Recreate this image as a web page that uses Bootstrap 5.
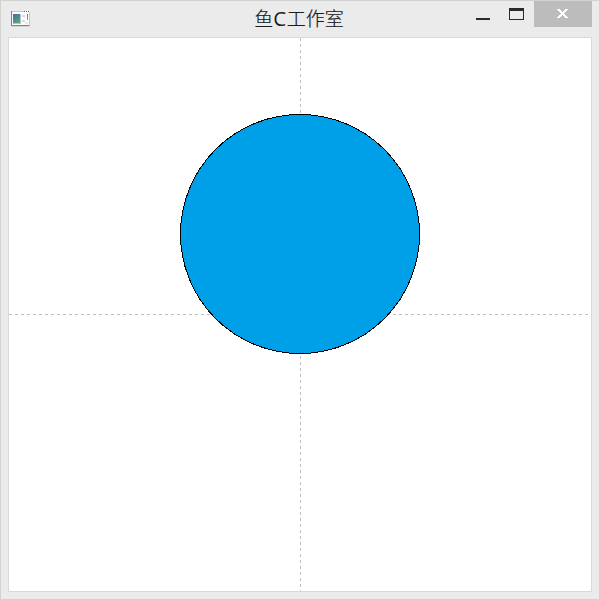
<!DOCTYPE html>
<html lang="zh-CN">
<head>
<meta charset="utf-8">
<meta name="viewport" content="width=device-width, initial-scale=1">
<title>鱼C工作室</title>
<link href="https://cdn.jsdelivr.net/npm/bootstrap@5.3.0/dist/css/bootstrap.min.css" rel="stylesheet">
<style>
body { background: #ebebeb; }
.app-window { width: 600px; height: 600px; background: #ebebeb; border: 1px solid #d2d2d2; }
.title-bar { height: 36px; }
.app-icon { margin: 9px 0 0 9px; }
.window-title { font: 300 19px/34px "Noto Sans CJK SC", sans-serif; color: #1c1c1c; white-space: nowrap; padding-right: 2px; -webkit-text-stroke: .2px #1c1c1c; }
.window-title .latin { font: 400 20.5px/1 "Open Sans", sans-serif; letter-spacing: .5px; -webkit-text-stroke: 0; }
.side { width: 200px; }
.side-end { width: 200px; padding-right: 7px; }
.win-btn { padding: 0; border: 0; background: none; line-height: 0; }
.win-close { background: #bcbcbc; }
.canvas-area { margin: 0 7px 7px; border: 1px solid #d9d9d9; background: #fff; line-height: 0; }
svg { display: block; }
</style>
</head>
<body>
<div class="app-window d-flex flex-column overflow-hidden">
  <header class="title-bar d-flex justify-content-between align-items-start flex-shrink-0">
    <div class="side">
      <svg class="app-icon" width="21" height="18" shape-rendering="crispEdges" aria-hidden="true">
        <defs>
          <linearGradient id="tile" x1="0" y1="0" x2=".5" y2="1"><stop stop-color="#4868a8"/><stop offset="1" stop-color="#50a878"/></linearGradient>
          <linearGradient id="strip" x1="0" y1="0" x2="0" y2="1"><stop stop-color="#4878a8"/><stop offset="1" stop-color="#68b878"/></linearGradient>
        </defs>
        <path fill="#d4d4d4" d="M2 16h18v1H2z"/>
        <path fill="#fcfcfc" d="M1 1h19v15H1z"/>
        <path fill="#788490" d="M1 1h1v15H1zM1 15h18v1H1z"/>
        <path fill="#c4c8cc" d="M19 2h1v14h-1zM2 1h12v1H2z"/>
        <path fill="#526078" d="M14 1h1v1h-1zM16 1h1v1h-1zM18 1h1v1h-1z"/>
        <path fill="#b9c0d4" d="M3 4h8v10H3z"/>
        <path fill="url(#tile)" d="M3 4h7v9H3z"/>
        <path fill="#d8dadc" d="M12 5h3v2h-3zM12 10h3v2h-3z"/>
        <path fill="url(#strip)" d="M17 4h1v6h-1z"/>
        <path fill="#e8ece8" d="M15 12h3v2h-3z"/>
      </svg>
    </div>
    <div class="window-title">鱼<span class="latin">C</span>工作室</div>
    <div class="side-end d-flex justify-content-end">
      <button class="win-btn" aria-label="最小化"><svg width="30" height="26"><path fill="#2a2a2a" d="M6 17h14v2H6z"/></svg></button>
      <button class="win-btn" aria-label="最大化"><svg width="34" height="26"><path fill="#2a2a2a" fill-rule="evenodd" d="M9 7h15v12H9zM10 10v8h13v-8z"/></svg></button>
      <button class="win-btn win-close" aria-label="关闭"><svg width="58" height="26"><path fill="#fff" shape-rendering="crispEdges" d="M23 8h3v1h1v1h1v1h1v-1h1v-1h1v-1h3v1h-1v1h-1v1h-1v1h-1v1h1v1h1v1h1v1h1v1h-3v-1h-1v-1h-1v-1h-1v1h-1v1h-1v1h-3v-1h1v-1h1v-1h1v-1h1v-1h-1v-1h-1v-1h-1v-1h-1z"/></svg></button>
    </div>
  </header>
  <main class="canvas-area flex-grow-1">
    <svg width="582" height="553" shape-rendering="crispEdges">
      <path d="M0 276.500H582M291.500 0V553" fill="none" stroke="#bfbfbf" stroke-dasharray="3 3"/>
      <circle cx="291" cy="196" r="119.500" fill="#00a0e9" stroke="#000"/>
    </svg>
  </main>
</div>
<script src="https://cdn.jsdelivr.net/npm/bootstrap@5.3.0/dist/js/bootstrap.bundle.min.js"></script>
</body>
</html>
